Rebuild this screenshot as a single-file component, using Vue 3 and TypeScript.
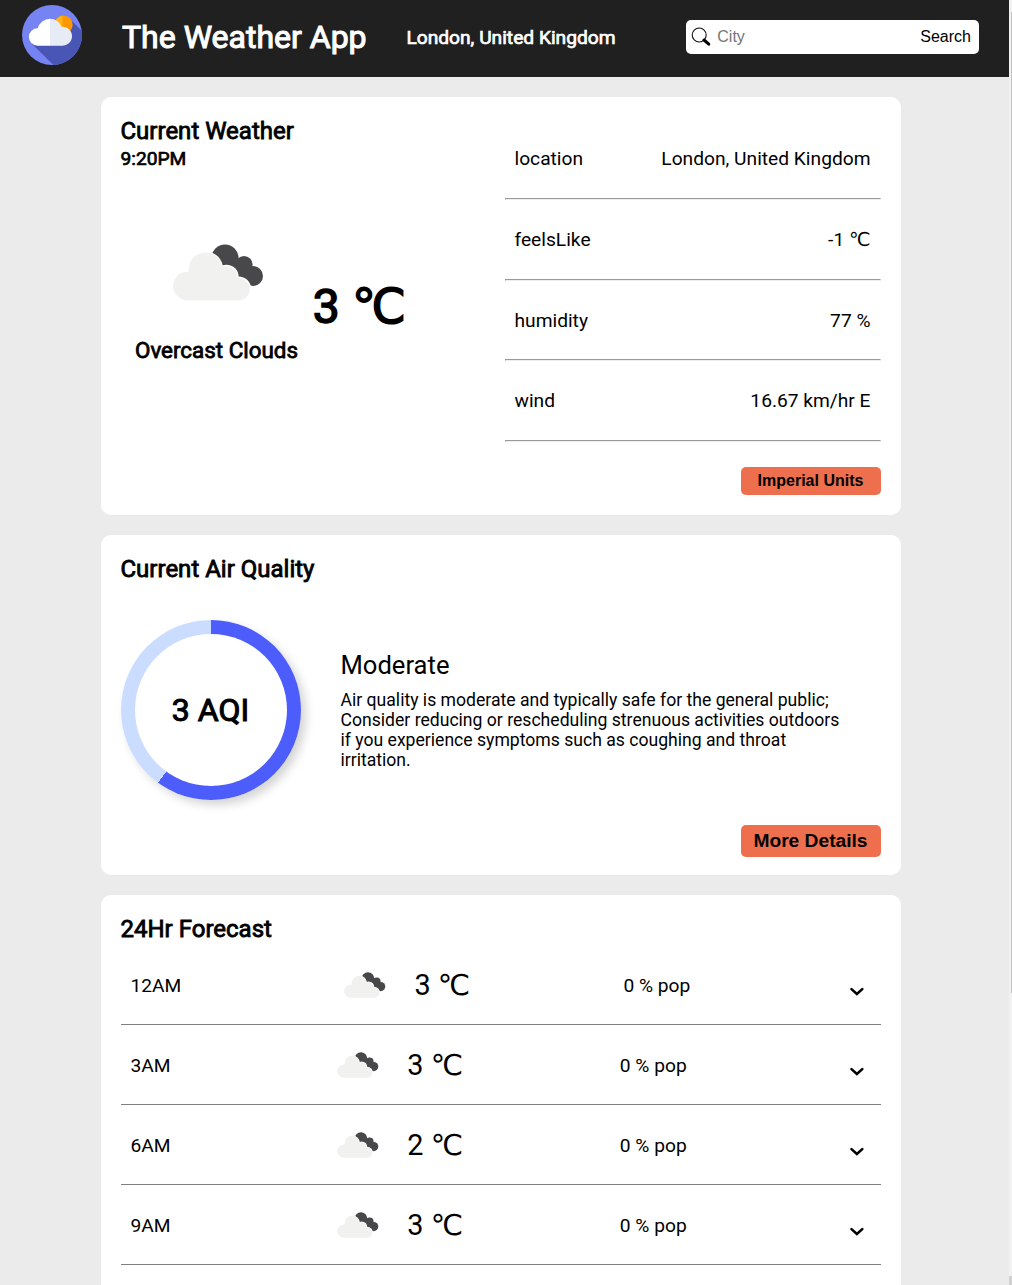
<script setup lang="ts">
import { ref } from 'vue'

interface Detail {
  label: string
  value: string
}

interface Hour {
  time: string
  temp: number
  pop: number
}

const city = ref('')
const details: Detail[] = [
  { label: 'location', value: 'London, United Kingdom' },
  { label: 'feelsLike', value: '-1 ℃' },
  { label: 'humidity', value: '77 %' },
  { label: 'wind', value: '16.67 km/hr E' },
]
const hours: Hour[] = [
  { time: '12AM', temp: 3, pop: 0 },
  { time: '3AM', temp: 3, pop: 0 },
  { time: '6AM', temp: 2, pop: 0 },
  { time: '9AM', temp: 3, pop: 0 },
]
</script>

<template>
  <svg width="0" height="0" class="symbols">
    <symbol id="overcast" viewBox="8 9 91 57">
      <g fill="#48484a">
        <circle cx="60" cy="23" r="13.6" />
        <circle cx="79" cy="29.5" r="8.6" />
        <circle cx="88" cy="41" r="10" />
        <path d="M60 10 73 23 80 30 90 50 70 48 56 30Z" />
      </g>
      <g fill="#fff">
        <circle cx="40.500" cy="34" r="17.600" />
        <circle cx="61.500" cy="42" r="12.200" />
        <circle cx="73.500" cy="54" r="12.600" />
      </g>
      <g fill="#f1f1f0">
        <circle cx="22.300" cy="51" r="14.300" />
        <circle cx="40.500" cy="34" r="16.600" />
        <circle cx="61.500" cy="42" r="11" />
        <circle cx="73.500" cy="54" r="11.300" />
        <path d="M22 36.700 40 34 61 40 73.500 54V65.300H22Z" />
      </g>
    </symbol>
  </svg>
  <div class="app">
    <div class="page">
      <header class="header">
        <svg class="logo" viewBox="0 0 60 60">
          <defs>
            <clipPath id="disc"><circle cx="30" cy="30" r="30" /></clipPath>
          </defs>
          <circle cx="30" cy="30" r="30" fill="#7584f2" />
          <path clip-path="url(#disc)" fill="#4a56b5" d="M48 14 62 28V62H33.500L9.500 38.500Z" />
          <circle cx="41.500" cy="19.800" r="9.200" fill="#ff9800" />
          <path d="M40.500 10.700A9.200 9.200 0 0 0 32.500 19.500L40.500 22Z" fill="#ffb316" />
          <path d="M15.500 40.700a8.700 8.700 0 0 1 .2-17.400A13.200 13.200 0 0 1 28 13.800V40.700Z" fill="#fff" />
          <path d="M28 13.800a13 13 0 0 1 11.600 8A9.500 9.500 0 1 1 39.500 40.700H28Z" fill="#e7ebf5" />
        </svg>
        <h1 class="title">The Weather App</h1>
        <h3 class="place">London, United Kingdom</h3>
        <form class="search" @submit.prevent>
          <svg class="glass" viewBox="0 0 20 20">
            <circle cx="8.200" cy="8" r="7" fill="none" stroke="#111" stroke-width="1.100" />
            <path d="M13 13 17.800 17.200" stroke="#000" stroke-width="3" stroke-linecap="round" />
          </svg>
          <input v-model="city" class="city" placeholder="City" />
          <button class="go">Search</button>
        </form>
      </header>

      <main class="cards">
        <section class="card current">
          <div class="summary">
            <h2 class="heading">Current Weather</h2>
            <h3 class="clock">9:20PM</h3>
            <div class="now">
              <div class="sky">
                <svg class="sky-icon"><use href="#overcast" /></svg>
                <h3 class="sky-label">Overcast Clouds</h3>
              </div>
              <div class="temp">3 ℃</div>
            </div>
          </div>
          <div class="details">
            <template v-for="d in details" :key="d.label">
              <div class="detail">
                <span>{{ d.label }}</span>
                <span>{{ d.value }}</span>
              </div>
              <hr class="rule" />
            </template>
            <button class="btn units">Imperial Units</button>
          </div>
        </section>

        <section class="card air">
          <h2 class="heading">Current Air Quality</h2>
          <div class="air-body">
            <div class="ring"><div class="ring-inner">3 AQI</div></div>
            <div class="advice">
              <div class="level">Moderate</div>
              <p class="text">
                Air quality is moderate and typically safe for the general public; Consider reducing
                or rescheduling strenuous activities outdoors if you experience symptoms such as
                coughing and throat irritation.
              </p>
            </div>
          </div>
          <button class="btn more">More Details</button>
        </section>

        <section class="card forecast">
          <h2 class="heading">24Hr Forecast</h2>
          <div v-for="h in hours" :key="h.time" class="hour">
            <span>{{ h.time }}</span>
            <span class="hour-temp">
              <svg class="hour-icon"><use href="#overcast" /></svg>
              {{ h.temp }} ℃
            </span>
            <span>{{ h.pop }} % pop</span>
            <svg class="chevron" viewBox="0 0 27 28">
              <path d="M8.500 18.100 13.900 22.900 19.300 18.100" fill="none" stroke="#000" stroke-width="2.600" stroke-linecap="round" />
            </svg>
          </div>
        </section>
      </main>
    </div>
    <div class="scroll"><i class="thumb"></i><i class="corner"></i></div>
  </div>
</template>

<style>
body {
  margin: 0;
  overflow: hidden;
}
</style>

<style scoped>
.symbols {
  position: absolute;
}
.app {
  display: flex;
  height: 1285px;
  overflow: hidden;
  font-family: Roboto, 'DejaVu Sans', sans-serif;
  font-size: 19.2px;
  color: #000;
  background: #ebebeb;
}
h1,
h2,
h3,
p {
  margin: 0;
  font-weight: 400;
}
.page {
  width: 1009px;
}
.header {
  display: flex;
  align-items: center;
  box-sizing: border-box;
  height: 77px;
  padding: 0 30px 3px 22px;
  background: #202020;
  color: #fff;
}
.logo {
  width: 60px;
  height: 60px;
  margin: -5px 40px 0 0;
}
.title {
  width: 244px;
  margin-right: 40.400px;
  font-size: 32px;
  white-space: nowrap;
  -webkit-text-stroke: 1.050px currentColor;
}
.place {
  padding-top: 1px;
  font-size: 19.200px;
  white-space: nowrap;
  -webkit-text-stroke: 0.700px currentColor;
}
.search {
  display: flex;
  align-items: center;
  box-sizing: border-box;
  width: 293px;
  height: 34px;
  margin-left: auto;
  padding: 0 8px 0 5px;
  border-radius: 5px;
  background: #fff;
}
.glass {
  width: 20px;
  height: 20px;
  flex: none;
}
.city,
.go {
  padding: 0;
  border: 0;
  background: none;
  font: 16px 'Liberation Sans', sans-serif;
  color: #000;
}
.city {
  flex: 1;
  min-width: 0;
  margin-left: 6.300px;
}
.city::placeholder {
  color: #757575;
}
.cards {
  display: flex;
  flex-direction: column;
  gap: 20px;
  width: 800px;
  margin: 20px 0 0 100.500px;
}
.card {
  box-sizing: border-box;
  padding: 20px;
  border-radius: 10px;
  background: #fff;
}
.heading {
  font-size: 24px;
  line-height: 28px;
  -webkit-text-stroke: 0.850px currentColor;
}
.current {
  display: flex;
  justify-content: space-between;
  height: 418px;
}
.clock {
  padding-top: 1px;
  font-size: 19.200px;
  line-height: 26px;
  -webkit-text-stroke: 0.700px currentColor;
}
.now {
  display: flex;
  align-items: center;
  gap: 14.800px;
  padding: 72px 0 0 14.500px;
}
.sky {
  display: flex;
  flex-direction: column;
  align-items: center;
}
.sky-icon {
  width: 91px;
  height: 57px;
  margin-left: 3px;
}
.sky-label {
  margin-top: 36px;
  font-size: 22.400px;
  line-height: 26px;
  -webkit-text-stroke: 0.800px currentColor;
}
.temp {
  padding-top: 7px;
  font-size: 48px;
  line-height: 56px;
  -webkit-text-stroke: 1.500px currentColor;
}
.details {
  display: flex;
  flex-direction: column;
  width: 376px;
  padding-top: 2.650px;
}
.detail {
  display: flex;
  align-items: center;
  justify-content: space-between;
  height: 78.600px;
  padding: 0 10px;
}
.rule {
  width: 374px;
  margin: 0;
  border: 1px solid;
  border-color: #9a9a9a #eee #eee #9a9a9a;
}
.btn {
  flex: none;
  align-self: flex-end;
  width: 140px;
  padding: 0;
  border: 0;
  border-radius: 5px;
  background: #ee6f4d;
  color: #000;
  font: bold 16px 'Liberation Sans', sans-serif;
}
.units {
  height: 28px;
  margin-top: 25px;
}
.air {
  display: flex;
  flex-direction: column;
  height: 340px;
}
.air-body {
  display: flex;
  align-items: center;
  gap: 40px;
  margin-top: 37px;
}
.ring {
  display: grid;
  place-items: center;
  flex: none;
  width: 180px;
  height: 180px;
  border-radius: 50%;
  background: conic-gradient(#4d5dfb 60%, #cadcff 0);
  box-shadow: 5px 5px 10px rgba(0, 0, 0, 0.17);
}
.ring-inner {
  display: grid;
  place-items: center;
  width: 152px;
  height: 152px;
  border-radius: 50%;
  background: #fff;
  font-size: 32px;
  -webkit-text-stroke: 1.050px currentColor;
}
.level {
  font-size: 25.600px;
  line-height: 30px;
}
.text {
  width: 500px;
  margin-top: 10px;
  font-size: 17.600px;
  line-height: 20px;
}
.more {
  height: 32px;
  margin-top: 25px;
  font-size: 19.200px;
}
.forecast {
  height: 480px;
}
.hour {
  display: flex;
  align-items: center;
  justify-content: space-between;
  box-sizing: border-box;
  height: 80px;
  padding: 1px 10px 0;
  border-bottom: 1px solid #808080;
}
.forecast .heading {
  margin-bottom: 2px;
}
.hour-temp {
  display: flex;
  align-items: center;
  font-size: 28.800px;
  line-height: 34px;
}
.hour-icon {
  width: 42px;
  height: 26px;
  margin: 0 28.400px 0 9.600px;
}
.chevron {
  width: 27px;
  height: 28px;
}
.scroll {
  display: flex;
  flex-direction: column;
  justify-content: space-between;
  box-sizing: border-box;
  width: 3px;
  padding-top: 12px;
  background: #f1f1f1;
}
.thumb {
  width: 1px;
  height: 981px;
  margin-left: 2px;
  background: #c1c1c1;
}
.corner {
  height: 9px;
  background: #d0d0d0;
}
</style>
